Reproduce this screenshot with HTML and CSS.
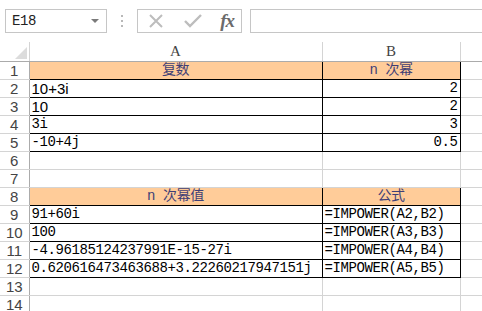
FILE: index.html
```html
<!DOCTYPE html>
<html lang="zh-CN">
<head>
    <meta charset="UTF-8">
    <title>IMPOWER</title>
    <link rel="stylesheet" href="styles.css">
</head>
<body>
    <div class="toolbar">
        <div class="name-box">
            <span>E18</span>
            <svg class="drop" width="8" height="5" viewBox="0 0 8 5"><path d="M0 0h8L4 4z" fill="#7a7a7a"/></svg>
        </div>
        <div class="dots"><i></i><i></i><i></i></div>
        <div class="fx-box">
            <svg width="18" height="18" viewBox="0 0 18 18"><path d="M3 3l12 12M15 3L3 15" stroke="#bdbdbd" stroke-width="2" fill="none"/></svg>
            <svg width="20" height="18" viewBox="0 0 20 18"><path d="M2 9l5 5L18 3" stroke="#bdbdbd" stroke-width="2.4" fill="none"/></svg>
            <span class="fx">fx</span>
        </div>
        <div class="formula-input"></div>
    </div>

    <table class="sheet">
        <colgroup>
            <col class="c-head">
            <col class="c-a">
            <col class="c-b">
            <col class="c-c">
        </colgroup>
        <thead>
            <tr>
                <th class="corner"><svg width="12" height="12" viewBox="0 0 12 12"><path d="M12 0V12H0z" fill="#dcdcdc"/></svg></th>
                <th class="col-head">A</th>
                <th class="col-head">B</th>
                <th class="col-head"></th>
            </tr>
        </thead>
        <tbody>
            <tr><th class="row-head">1</th><td class="box title">复数</td><td class="box title">n 次幂</td><td></td></tr>
            <tr><th class="row-head">2</th><td class="box sans">10+3i</td><td class="box num">2</td><td></td></tr>
            <tr><th class="row-head">3</th><td class="box sans">10</td><td class="box num">2</td><td></td></tr>
            <tr><th class="row-head">4</th><td class="box">3i</td><td class="box num">3</td><td></td></tr>
            <tr><th class="row-head">5</th><td class="box">-10+4j</td><td class="box num">0.5</td><td></td></tr>
            <tr><th class="row-head">6</th><td></td><td></td><td></td></tr>
            <tr><th class="row-head">7</th><td></td><td></td><td></td></tr>
            <tr><th class="row-head">8</th><td class="box title">n 次幂值</td><td class="box title">公式</td><td></td></tr>
            <tr><th class="row-head">9</th><td class="box">91+60i</td><td class="box">=IMPOWER(A2,B2)</td><td></td></tr>
            <tr><th class="row-head">10</th><td class="box">100</td><td class="box">=IMPOWER(A3,B3)</td><td></td></tr>
            <tr><th class="row-head">11</th><td class="box">-4.96185124237991E-15-27i</td><td class="box">=IMPOWER(A4,B4)</td><td></td></tr>
            <tr><th class="row-head">12</th><td class="box">0.620616473463688+3.22260217947151j</td><td class="box">=IMPOWER(A5,B5)</td><td></td></tr>
            <tr><th class="row-head">13</th><td></td><td></td><td></td></tr>
            <tr><th class="row-head">14</th><td></td><td></td><td></td></tr>
        </tbody>
    </table>
</body>
</html>
```

FILE: styles.css
```css
/* planilha - IMPOWER */
body {
    margin: 0;
    padding: 0;
    background-color: #fff;
    font-family: "Liberation Mono", "Noto Sans CJK SC", monospace;
    font-size: 14px;
    letter-spacing: -0.4px;
    color: #000;
    width: 482px;
    height: 311px;
    overflow: hidden;
}
.toolbar {
    display: flex;
    align-items: center;
    height: 42px;
    padding-left: 5px;
    box-sizing: border-box;
}
.name-box {
    width: 102px;
    height: 24px;
    box-sizing: border-box;
    border: 1px solid #c6c6c6;
    display: flex;
    align-items: center;
    justify-content: space-between;
    padding: 0 7px 0 6px;
    color: #222;
    font-size: 14px;
}
.name-box .drop {
    margin-top: 1px;
}
.dots {
    width: 30px;
    display: flex;
    flex-direction: column;
    align-items: center;
    gap: 3px;
}
.dots i {
    width: 2px;
    height: 2px;
    background-color: #b8b8b8;
}
.fx-box {
    width: 105px;
    height: 24px;
    box-sizing: border-box;
    border: 1px solid #c6c6c6;
    display: flex;
    align-items: center;
    justify-content: space-between;
    padding: 0 4px 0 9px;
}
.fx {
    font-family: "Liberation Serif", serif;
    font-style: italic;
    font-weight: bold;
    font-size: 19px;
    color: #6b6b6b;
    letter-spacing: -1px;
    padding-right: 3px;
}
.formula-input {
    margin-left: 8px;
    flex: 1;
    height: 24px;
    box-sizing: border-box;
    border: 1px solid #c6c6c6;
    border-right: none;
}
.sheet {
    border-collapse: collapse;
    table-layout: fixed;
    width: 500px;
}
.c-head { width: 29px; }
.c-a { width: 293px; }
.c-b { width: 138px; }
.c-c { width: 40px; }
.sheet th, .sheet td {
    height: 17px;
    padding: 0 2px;
    border: 1px solid #d4d4d4;
    white-space: nowrap;
    overflow: visible;
    line-height: 17px;
    font-weight: normal;
}
.sheet thead th {
    border-top: none;
    border-color: #d4d4d4;
    border-bottom-color: #ababab;
    color: #444;
    font-family: "Liberation Serif", serif;
    font-size: 15px;
    letter-spacing: 0;
}
.sheet .corner {
    border-left: none;
    text-align: right;
    vertical-align: bottom;
    padding: 0 2px 2px 0;
    line-height: 0;
}
.row-head {
    border-left: none !important;
    border-right-color: #ababab !important;
    color: #444;
    font-family: "Liberation Sans", sans-serif;
    font-size: 15px;
    letter-spacing: 0;
    text-align: center;
}
.sheet td.box {
    border: 1px solid #000;
}
.title {
    background-color: #ffcc99;
    color: #3f3f76;
    text-align: center;
}
.sans {
    font-family: "Liberation Sans", sans-serif;
    font-size: 15px;
    letter-spacing: 0;
}
.num {
    text-align: right;
}
```
